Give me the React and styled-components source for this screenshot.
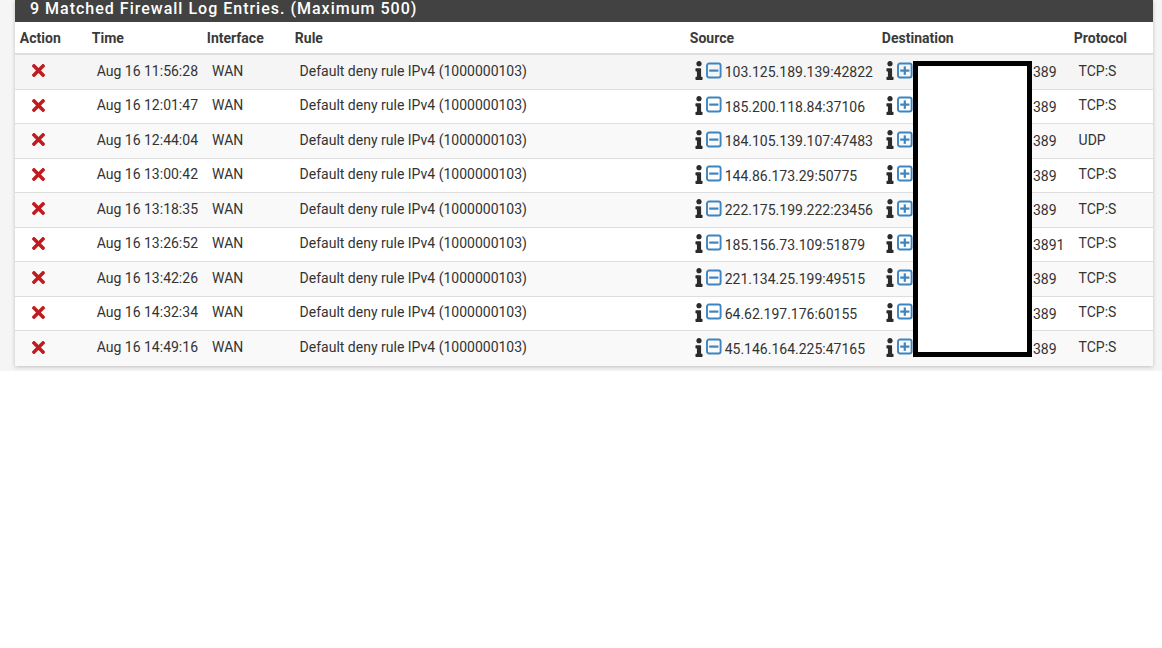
import React from "react";
import styled, { createGlobalStyle } from "styled-components";
import { FaInfo, FaTimes } from "react-icons/fa";

const Global = createGlobalStyle`
  html, body { margin: 0; padding: 0; background: #fff; }
  body { font-family: Roboto, "Liberation Sans", sans-serif; font-size: 14px; color: #333; }
`;

const COLUMNS = "72px 115px 88px 395px 192px 192px 84px";

const Page = styled.div`
  height: 371px;
  overflow: hidden;
  background: #f5f5f5;
  padding: 0 9px 0 15px;
`;

const Panel = styled.section`
  position: relative;
  width: 1138px;
  background: #fff;
  box-shadow: 0 1px 4px rgba(0, 0, 0, 0.22);
`;

const Title = styled.h2`
  margin: 0;
  height: 22px;
  padding-left: 15px;
  background: #424242;
  color: #fff;
  font-size: 16px;
  font-weight: 500;
  line-height: 18px;
  letter-spacing: 1px;
  white-space: nowrap;
`;

const HeadRow = styled.div`
  display: grid;
  grid-template-columns: ${COLUMNS};
  height: 31px;
  align-items: center;
  border-bottom: 2px solid #dedede;
  box-sizing: content-box;
`;

const HeadCell = styled.div`
  padding-left: 4.85px;
  font-weight: 700;
  color: #3a3a3a;
`;

const Row = styled.div`
  display: grid;
  grid-template-columns: ${COLUMNS};
  height: 34.5px;
  padding-bottom: 2px;
  box-sizing: border-box;
  align-items: center;
  background: ${(p) => p.$bg};
  border-bottom: ${(p) => (p.$last ? "0" : "1px solid #ddd")};
`;

const Cell = styled.div`
  padding-left: ${(p) => p.$pad ?? 10}px;
  white-space: nowrap;
  color: #333;
`;

const ActionCell = styled.div`
  display: flex;
  padding-left: 14px;
  color: #c01c1f;
`;

const HostCell = styled.div`
  display: flex;
  align-items: center;
  padding-left: ${(p) => p.$pad}px;
  white-space: nowrap;
  color: #333;
`;

const InfoIcon = styled(FaInfo)`
  flex: none;
  width: 8px;
  height: 19px;
  color: #2b2b2b;
`;

const SquareIcon = styled.svg`
  flex: none;
  width: 16px;
  height: 17px;
  margin: -1px 2.7px 0 3px;
  color: #3d85c0;
`;

const Address = styled.span`
  margin-top: 3px;
`;

const RedactedGap = styled.span`
  flex: none;
  width: 117.3px;
`;

const Redaction = styled.div`
  position: absolute;
  left: 898px;
  top: 61px;
  width: 119px;
  height: 296px;
  box-sizing: border-box;
  border: 5px solid #000;
  background: #fff;
`;

function Square({ plus }) {
  return (
    <SquareIcon viewBox="0 0 16 17" aria-hidden="true">
      <rect x="1" y="1.5" width="13.6" height="14" rx="2" fill="none" stroke="currentColor" strokeWidth="1.9" />
      <path d="M3.2 7.5h9.2v2.2H3.2z" fill="currentColor" />
      {plus && <path d="M6.7 4.4h2.2v8.4H6.7z" fill="currentColor" />}
    </SquareIcon>
  );
}

const rows = [
  ["Aug 16 11:56:28", "103.125.189.139:42822", "389", "TCP:S"],
  ["Aug 16 12:01:47", "185.200.118.84:37106", "389", "TCP:S"],
  ["Aug 16 12:44:04", "184.105.139.107:47483", "389", "UDP"],
  ["Aug 16 13:00:42", "144.86.173.29:50775", "389", "TCP:S"],
  ["Aug 16 13:18:35", "222.175.199.222:23456", "389", "TCP:S"],
  ["Aug 16 13:26:52", "185.156.73.109:51879", "3891", "TCP:S"],
  ["Aug 16 13:42:26", "221.134.25.199:49515", "389", "TCP:S"],
  ["Aug 16 14:32:34", "64.62.197.176:60155", "389", "TCP:S"],
  ["Aug 16 14:49:16", "45.146.164.225:47165", "389", "TCP:S"],
];

const rowBg = (i) => (i === 0 ? "#f5f5f5" : i % 2 === 0 ? "#f9f9f9" : "#fff");

export default function App() {
  return (
    <>
      <Global />
      <Page>
        <Panel>
          <Title>9 Matched Firewall Log Entries. (Maximum 500)</Title>
          <HeadRow>
            {["Action", "Time", "Interface", "Rule", "Source", "Destination", "Protocol"].map((h) => (
              <HeadCell key={h}>{h}</HeadCell>
            ))}
          </HeadRow>
          {rows.map(([time, src, port, proto], i) => (
            <Row key={time} $bg={rowBg(i)} $last={i === rows.length - 1}>
              <ActionCell><FaTimes size={19} /></ActionCell>
              <Cell $pad={9.7}>{time}</Cell>
              <Cell>WAN</Cell>
              <Cell $pad={9.6}>Default deny rule IPv4 (1000000103)</Cell>
              <HostCell $pad={10}>
                <InfoIcon />
                <Square />
                <Address>{src}</Address>
              </HostCell>
              <HostCell $pad={9}>
                <InfoIcon />
                <Square plus />
                <RedactedGap />
                <Address>{port}</Address>
              </HostCell>
              <Cell $pad={9.6}>{proto}</Cell>
            </Row>
          ))}
          <Redaction />
        </Panel>
      </Page>
    </>
  );
}
